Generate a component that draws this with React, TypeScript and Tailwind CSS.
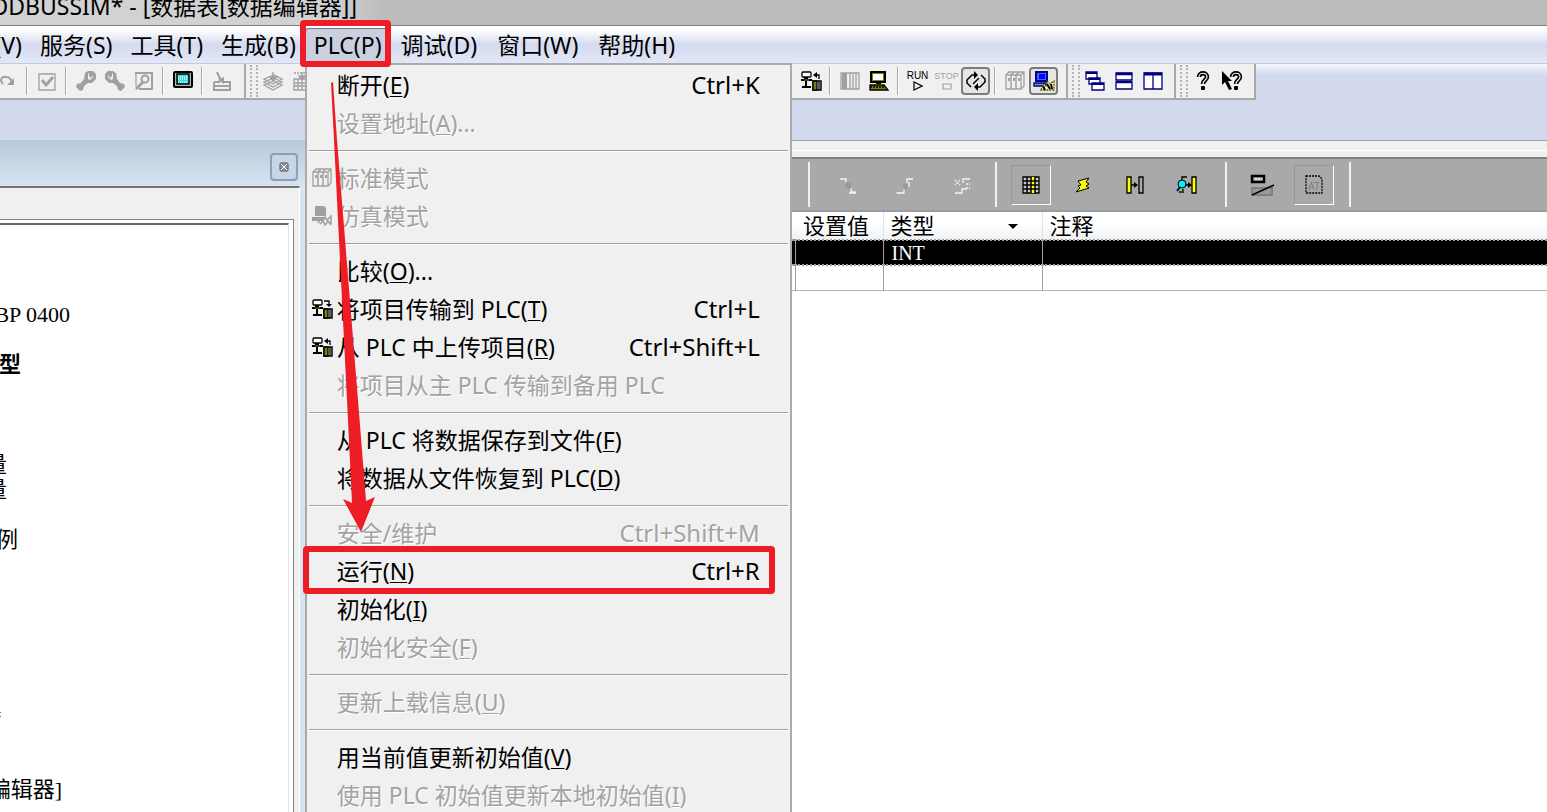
import React from "react";
import clsx from "clsx";

interface MenuEntry {
  label: string;
  hotkey?: string;
  tail?: string;
  shortcut?: string;
  disabled?: boolean;
  icon?: React.ReactNode;
  marked?: boolean;
}

interface IconProps {
  children: React.ReactNode;
}

const Icon: React.FC<IconProps> = ({ children }) => (
  <svg viewBox="0 0 20 20" className="h-5 w-5 shrink-0 overflow-visible" fill="none" stroke="#000" strokeWidth="1.3" aria-hidden="true">
    {children}
  </svg>
);

const RedoIcon = () => (
  <Icon>
    <path d="M5 13C1 9 4 5 8 6c3 0 5 2 6 5" stroke="#a0a0a0" strokeWidth="2" />
    <path d="M16 7v7H9z" fill="#a0a0a0" stroke="none" />
  </Icon>
);

const CheckIcon = () => (
  <Icon>
    <path d="M2 3h16v16H2z" stroke="#a0a0a0" />
    <path d="M5 9l4 5 7-8" stroke="#a0a0a0" strokeWidth="3" />
  </Icon>
);

const WrenchIcon: React.FC<{ flip?: boolean }> = ({ flip }) => (
  <Icon>
    <g transform={flip ? "matrix(-1 0 0 1 20 0)" : undefined} stroke="none" fill="#a0a0a0">
      <path d="M9 2l3-2h5l3 3v5l-4 4h-4l-4 3-1 4-3 1-4-4 1-3 4-1 3-4z" />
      <path d="M12 3l2-2 3 1v4l-3 3-2-1z" fill="#f0f0f0" />
      <path d="M13 1v4l2 2 2-3V1z" />
    </g>
  </Icon>
);

const FindIcon = () => (
  <Icon>
    <g stroke="#a0a0a0">
      <path d="M1 2h17v16H5" strokeWidth="2" />
      <path d="M2 2v13" />
      <circle cx="11" cy="8" r="3.5" strokeWidth="2" />
      <path d="M9 11l-7 7" strokeWidth="3" />
    </g>
  </Icon>
);

const ScreenIcon = () => (
  <Icon>
    <rect x="1" y="1" width="18" height="15" rx="1" fill="#b8b8b8" strokeWidth="2" />
    <rect x="4" y="3" width="12" height="10" fill="#40d8d8" strokeWidth="1.5" />
    <path d="M5 6h10M5 8h10M5 11h10" stroke="#c8ffff" strokeDasharray="1 1" />
  </Icon>
);

const DownloadIcon = () => (
  <Icon>
    <g stroke="#a0a0a0">
      <path d="M2 11h6M11 11h7v8H2v-8M2 15h16" strokeWidth="2" />
      <path d="M5 1l4 9" strokeWidth="2" />
      <path d="M6 9l6-3v7z" fill="#a0a0a0" stroke="none" />
    </g>
  </Icon>
);

const LayersIcon = () => (
  <Icon>
    <g stroke="#a0a0a0">
      <path d="M1 14l10-4 8 4-9 5zM1 11l10-4 8 4-9 5zM1 8l10-4 8 4-9 5z" fill="#f0f0f0" />
      <path d="M10 1v7M7 6l3 4 4-4z" fill="#a0a0a0" />
    </g>
  </Icon>
);

const GridDownIcon = () => (
  <Icon>
    <g stroke="#a0a0a0">
      <path d="M2 8h16v11H2zM2 12h16M2 15h16M6 8v11M10 8v11M14 8v11" />
      <path d="M2 2h16" strokeDasharray="2 1" />
      <path d="M10 1v5M7 5l3 4 3-4z" fill="#a0a0a0" />
    </g>
  </Icon>
);

const TransferIcon: React.FC<{ down?: boolean }> = ({ down }) => (
  <Icon>
    <rect x="1" y="1" width="9" height="5" rx="1" fill="#fff" />
    <path d="M5 6v2" strokeWidth="4" />
    <path d="M0 9h11" stroke="#000" strokeWidth="2" />
    <path d="M3 9h5" stroke="#808000" strokeWidth="1" />
    <path d="M5 10v6M1 16h9" strokeWidth="2" />
    <path d="M12 10h8v9h-8z" fill="#fff" strokeWidth="1.5" />
    <path d="M12 10h4v9h-4z" fill="#808000" />
    <path d="M18 10v9" />
    {down ? (
      <>
        <path d="M12 2h5v3" />
        <path d="M14 5h6l-3 3z" fill="#000" stroke="none" />
      </>
    ) : (
      <>
        <path d="M18 8V4h-3" />
        <path d="M12 4l4-3v6z" fill="#000" stroke="none" />
      </>
    )}
  </Icon>
);

const RackIcon = () => (
  <Icon>
    <path d="M1 2h18v16H1z" stroke="#a0a0a0" />
    <path d="M2 2h5v16H2z" fill="#a0a0a0" stroke="none" />
    <path d="M10 2v16M13 2v16M16 2v16" stroke="#a0a0a0" />
  </Icon>
);

const ComputerIcon = () => (
  <Icon>
    <rect x="2" y="1" width="14" height="10" fill="#808000" strokeWidth="2" />
    <path d="M4 3h10v6H4z" fill="#fff" stroke="none" />
    <path d="M7 12h5" strokeWidth="2" />
    <path d="M1 14h14l4 5H1z" fill="#808000" />
    <path d="M1 16h15" strokeDasharray="2 1" />
  </Icon>
);

const LoopIcon = () => (
  <Icon>
    <path d="M9 4H6L1 9v3l4 4M11 16h3l5-5V8l-4-4" strokeWidth="1.5" />
    <path d="M7 13l6-6" strokeWidth="1.5" />
    <path d="M8 0v8l4-4zM12 12v8l-4-4z" fill="#000" stroke="none" />
  </Icon>
);

const ModulesIcon = () => (
  <Icon>
    <g stroke="#a0a0a0">
      <path d="M1 4l3-3h15v14l-3 3H1zM1 4h15v14M16 4l3-3" />
      <path d="M6 4v14M11 4v14M6 4l3-3M11 4l3-3" strokeWidth="1.5" />
      <path d="M4 7v3M9 7v3M14 7v3" strokeWidth="2" />
    </g>
  </Icon>
);

const SimulatorIcon: React.FC<{ muted?: boolean }> = ({ muted }) =>
  muted ? (
    <Icon>
      <path d="M3 0h9l2 2v8H3zM0 11h12v4H0z" fill="#a0a0a0" stroke="none" />
      <path d="M6 17l3-4 2 2 2-4 2 3 4-4v8M8 18l3-3 2 4 3-4 3 4" stroke="#a0a0a0" strokeWidth="1.5" />
    </Icon>
  ) : (
    <Icon>
      <path d="M2 1h11v9H2z" fill="#4060ff" stroke="#000080" strokeWidth="2" />
      <path d="M5 3h6v5H5z" fill="#00f" stroke="none" />
      <path d="M0 12h12v3H0z" fill="#9090c0" stroke="#000080" />
      <path d="M7 19l2-6 3 2 1-5 3 3 4-3v9z" fill="#fff9b0" stroke="#555500" strokeDasharray="2 1" />
      <path d="M9 15l2 4M13 13l3 5M17 13l1 5" strokeWidth="2" />
    </Icon>
  );

const CascadeIcon = () => (
  <Icon>
    <g fill="#fff" stroke="#000080">
      <path d="M1 1h11v7H1zM4 7h11v6H4zM7 12h12v7H7z" />
      <path d="M1 2h11M4 8h11M7 13h12" strokeWidth="2" />
    </g>
  </Icon>
);

const TileRowsIcon = () => (
  <Icon>
    <path d="M2 2h16v7H2zM2 11h16v7H2z" fill="#fff" stroke="#000080" />
    <path d="M2 3h16M2 11h16" stroke="#000080" strokeWidth="2.5" />
  </Icon>
);

const TileColumnsIcon = () => (
  <Icon>
    <path d="M1 2h18v16H1zM10 2v16" fill="#fff" stroke="#000080" />
    <path d="M1 3h18" stroke="#000080" strokeWidth="3" />
  </Icon>
);

const HelpMark = () => (
  <>
    <path d="M6 6c0-5 8-5 8 0 0 3-4 3-4 7" strokeWidth="4.5" />
    <path d="M6 6c0-5 8-5 8 0 0 3-4 3-4 7" stroke="#f0f0f0" strokeWidth="1.2" />
    <rect x="8" y="15" width="4" height="4" rx="1" fill="#000" stroke="none" />
  </>
);

const HelpIcon = () => (
  <Icon>
    <HelpMark />
  </Icon>
);

const ContextHelpIcon = () => (
  <Icon>
    <path d="M0 0v14l3-3 4 8 3-1-4-8h4z" fill="#000" stroke="none" />
    <g transform="translate(4 0)">
      <HelpMark />
    </g>
  </Icon>
);

const StepIcon: React.FC<{ kind: "over" | "into" | "out" }> = ({ kind }) => (
  <Icon>
    <g stroke="#f4f4f4" strokeWidth="1.3">
      {kind === "over" && (
        <>
          <path d="M2 4h6v4M13 13v4h5M11 18h7" />
          <path d="M8 7l5 1v5l-2 2-4-4z" fill="#989898" stroke="none" />
        </>
      )}
      {kind === "into" && (
        <>
          <path d="M2 18h7v-4M12 8V4h6M2 18v-1" />
          <path d="M7 9h5l2 2-5 4-1-3z" fill="#989898" stroke="none" />
          <path d="M14 7v5" />
        </>
      )}
      {kind === "out" && (
        <>
          <path d="M3 18h7v-4h5M11 8V4h7" />
          <path d="M3 5l5 5M8 5l-5 5M14 9h4M14 13h4" strokeDasharray="2 1" />
        </>
      )}
    </g>
  </Icon>
);

const TableIcon = () => (
  <Icon>
    <path d="M2 2h16v16H2z" fill="#c8c8c8" />
    <path d="M10 2h4v16h-4z" fill="#ff0" stroke="none" />
    <path d="M2 6h16M2 10h16M2 14h16M6 2v16M10 2v16M14 2v16" strokeWidth="1.5" />
  </Icon>
);

const BoltIcon = () => (
  <Icon>
    <path d="M16 3L5 6l3 4-3 1 2 2-4 4 13-4-3-2 3-2-3-2z" fill="#ff0" strokeWidth="1" />
  </Icon>
);

const InsertIcon = () => (
  <Icon>
    <path d="M2 2h4v16H2z" fill="#ff0" />
    <path d="M14 2h4v16h-4zM6 10h6" />
    <path d="M9 7v6l4-3z" fill="#000" stroke="none" />
  </Icon>
);

const InspectIcon = () => (
  <Icon>
    <path d="M15 2h4v16h-4z" fill="#ff0" />
    <path d="M5 6V2h5M9 10h5" />
    <path d="M11 7v6l4-3z" fill="#000" stroke="none" />
    <path d="M3 12l-3 4" stroke="#000080" strokeWidth="2" />
    <circle cx="5" cy="9" r="4" fill="#00f0f0" strokeWidth="1" />
    <path d="M2 17h4v-3" stroke="#006000" strokeWidth="2" />
  </Icon>
);

const CompareIcon = () => (
  <Icon>
    <path d="M0 1h12v6H0z" fill="#aaa" strokeWidth="2.5" />
    <path d="M3 4h7" stroke="#fff" strokeDasharray="2 1" />
    <path d="M0 13h20v7H0z" fill="#999" stroke="#808080" strokeWidth="2" />
    <path d="M0 20L22 10" strokeWidth="1.5" />
  </Icon>
);

const MemoryIcon = () => (
  <Icon>
    <path d="M2 1h13l3 3v14H2z" strokeDasharray="2 1" />
    <text x="4" y="15" fontSize="10" fontFamily="Liberation Sans" fill="#808080" stroke="none">
      AT
    </text>
  </Icon>
);

const Separator = () => <div className="mx-1 h-7 w-0.5 shrink-0 border-l border-[#a8a8a8] bg-white" />;

const Grip = () => (
  <div className="ml-1 flex h-8 w-2 shrink-0 justify-between">
    <div className="border-l-2 border-dotted border-[#b4b4b4]" />
    <div className="border-l-2 border-dotted border-[#b4b4b4]" />
  </div>
);

const ToolButton: React.FC<{ title: string; pressed?: boolean; children: React.ReactNode }> = ({ title, pressed, children }) => (
  <button
    type="button"
    title={title}
    className={clsx(
      "flex h-7 w-[29px] shrink-0 flex-col items-center justify-center",
      pressed && "rounded border-2 border-[#7c7c7c] bg-[#e6e6e6]"
    )}
  >
    {children}
  </button>
);

const DarkButton: React.FC<{ title: string; pressed?: boolean; children: React.ReactNode }> = ({ title, pressed, children }) => (
  <button
    type="button"
    title={title}
    className={clsx(
      "flex h-10 w-10 shrink-0 items-center justify-center border",
      pressed ? "border-b-white border-l-[#989898] border-r-white border-t-[#989898]" : "border-transparent"
    )}
  >
    {children}
  </button>
);

const DarkSeparator = () => <div className="h-[45px] w-0.5 shrink-0 bg-[#f0f0f0]" />;

const menuGroups: MenuEntry[][] = [
  [
    { label: "断开", hotkey: "E", shortcut: "Ctrl+K" },
    { label: "设置地址", hotkey: "A", tail: "...", disabled: true },
  ],
  [
    { label: "标准模式", disabled: true, icon: <ModulesIcon /> },
    { label: "仿真模式", disabled: true, icon: <SimulatorIcon muted /> },
  ],
  [
    { label: "比较", hotkey: "O", tail: "..." },
    { label: "将项目传输到 PLC", hotkey: "T", shortcut: "Ctrl+L", icon: <TransferIcon down /> },
    { label: "从 PLC 中上传项目", hotkey: "R", shortcut: "Ctrl+Shift+L", icon: <TransferIcon /> },
    { label: "将项目从主 PLC 传输到备用 PLC", disabled: true },
  ],
  [
    { label: "从 PLC 将数据保存到文件", hotkey: "F" },
    { label: "将数据从文件恢复到 PLC", hotkey: "D" },
  ],
  [
    { label: "安全/维护", shortcut: "Ctrl+Shift+M", disabled: true },
    { label: "运行", hotkey: "N", shortcut: "Ctrl+R", marked: true },
    { label: "初始化", hotkey: "I" },
    { label: "初始化安全", hotkey: "F", disabled: true },
  ],
  [{ label: "更新上载信息", hotkey: "U", disabled: true }],
  [
    { label: "用当前值更新初始值", hotkey: "V" },
    { label: "使用 PLC 初始值更新本地初始值", hotkey: "I", disabled: true },
  ],
];

const MenuRow: React.FC<{ entry: MenuEntry }> = ({ entry }) => (
  <li className="relative">
    <button
      type="button"
      disabled={entry.disabled}
      className={clsx(
        "flex h-[38px] w-full items-center whitespace-nowrap pl-[5px] pr-[30px] text-left",
        entry.disabled && "text-[#a3a3a3] [text-shadow:1px_1px_0_#fff]"
      )}
    >
      <span className="flex w-[25px] shrink-0">{entry.icon}</span>
      <span>
        {entry.label}
        {entry.hotkey && (
          <>
            (<u className="decoration-1 underline-offset-2">{entry.hotkey}</u>)
          </>
        )}
        {entry.tail}
      </span>
      {entry.shortcut && <span className="ml-auto text-[24px]">{entry.shortcut}</span>}
    </button>
    {entry.marked && <div className="absolute -bottom-1 -left-1 -top-[6px] right-[15px] rounded-sm border-[6px] border-[#ee1c25]" />}
  </li>
);

const PlcMenu = () => (
  <div className="absolute left-0 top-full z-10 w-[487px] border-2 border-[#a9abae] bg-[#f0f0f0] pb-10 pt-px">
    {menuGroups.map((group, index) => (
      <ul key={index}>
        {index > 0 && <li role="separator" className="mx-0.5 mb-[7px] mt-2 h-0.5 border-t border-[#a0a0a0] bg-white" />}
        {group.map((entry) => (
          <MenuRow key={entry.label} entry={entry} />
        ))}
      </ul>
    ))}
  </div>
);

const MenuBar = () => (
  <nav className="flex h-[38px] shrink-0 items-center border-b border-[#c4cadb] bg-linear-to-b from-white from-10% via-[#d5dbee] via-50% to-[#e2e8f8]">
    <div className="flex w-[31px] shrink-0 justify-end overflow-hidden">
      <button type="button" className="shrink-0 px-[9px]">视图(V)</button>
    </div>
    <button type="button" className="shrink-0 px-[9px]">服务(S)</button>
    <button type="button" className="shrink-0 px-[9px]">工具(T)</button>
    <button type="button" className="shrink-0 px-[9px]">生成(B)</button>
    <div className="relative flex h-full shrink-0 items-center">
      <button type="button" className="h-[34px] rounded-t border border-b-0 border-[#6f7480] bg-[#cbd0e0] px-2">PLC(P)</button>
      <PlcMenu />
      <div className="absolute -bottom-1 -left-[5px] -top-[6px] right-0 z-20 rounded-sm border-[6px] border-[#ee1c25]" />
    </div>
    <button type="button" className="shrink-0 px-[10px]">调试(D)</button>
    <button type="button" className="shrink-0 px-[10px]">窗口(W)</button>
    <button type="button" className="shrink-0 px-[10px]">帮助(H)</button>
  </nav>
);

const barClass = "flex h-9 shrink-0 items-center border-b-2 border-r-2 border-[#a8a8a8] bg-[#f0f0f0] pr-2";

const Toolbars = () => (
  <div className="flex h-[76px] shrink-0 items-start overflow-hidden bg-linear-to-b from-[#f6f8fd] to-[#d3d9ec] to-15%">
    <div className={clsx(barClass, "w-[246px] justify-end overflow-hidden")}>
      <ToolButton title="重做"><RedoIcon /></ToolButton>
      <Separator />
      <ToolButton title="确认"><CheckIcon /></ToolButton>
      <Separator />
      <ToolButton title="分析"><WrenchIcon /></ToolButton>
      <ToolButton title="配置"><WrenchIcon flip /></ToolButton>
      <ToolButton title="查找"><FindIcon /></ToolButton>
      <Separator />
      <ToolButton title="操作屏"><ScreenIcon /></ToolButton>
      <Separator />
      <ToolButton title="下载"><DownloadIcon /></ToolButton>
    </div>
    <div className={clsx(barClass, "w-[822px]")}>
      <Grip />
      <ToolButton title="生成项目"><LayersIcon /></ToolButton>
      <ToolButton title="重新生成"><GridDownIcon /></ToolButton>
      <div className="ml-auto flex items-center">
        <ToolButton title="上传项目"><TransferIcon /></ToolButton>
        <Separator />
        <ToolButton title="机架"><RackIcon /></ToolButton>
        <ToolButton title="连接"><ComputerIcon /></ToolButton>
        <Separator />
        <ToolButton title="运行">
          <span className="font-['Liberation_Sans'] text-[10px] leading-[10px]">RUN</span>
          <svg viewBox="0 0 10 10" className="h-2.5 w-2.5" fill="none" stroke="#000" strokeWidth="1.2">
            <path d="M1 1v8l8-4z" />
          </svg>
        </ToolButton>
        <ToolButton title="停止">
          <span className="font-['Liberation_Sans'] text-[9px] leading-[10px] text-[#a0a0a0]">STOP</span>
          <svg viewBox="0 0 10 10" className="h-2.5 w-2.5" fill="none" stroke="#a0a0a0" strokeWidth="1.2">
            <path d="M1 3h8v5H1z" />
          </svg>
        </ToolButton>
        <ToolButton title="动态显示" pressed><LoopIcon /></ToolButton>
        <Separator />
        <ToolButton title="标准模式"><ModulesIcon /></ToolButton>
        <ToolButton title="仿真模式" pressed><SimulatorIcon /></ToolButton>
      </div>
    </div>
    <div className={clsx(barClass, "w-[108px]")}>
      <Grip />
      <ToolButton title="层叠"><CascadeIcon /></ToolButton>
      <ToolButton title="横向平铺"><TileRowsIcon /></ToolButton>
      <ToolButton title="纵向平铺"><TileColumnsIcon /></ToolButton>
    </div>
    <div className={clsx(barClass, "w-[80px]")}>
      <Grip />
      <ToolButton title="帮助"><HelpIcon /></ToolButton>
      <ToolButton title="这是什么？"><ContextHelpIcon /></ToolButton>
    </div>
  </div>
);

// Lines of the hardware catalogue, scrolled so that only their right ends show.
const catalogLines = [
  { text: "BMX XBP 0400", className: "w-[70px]" },
  { text: "" },
  { text: "类型", className: "w-[21px] font-bold" },
  { text: "" },
  { text: "" },
  { text: "" },
  { text: "变量", className: "w-[7px]" },
  { text: "变量", className: "w-[7px]" },
  { text: "" },
  { text: "实例", className: "w-[18px]" },
  { text: "" },
  { text: "" },
  { text: "" },
  { text: "" },
  { text: "" },
  { text: "" },
  { text: "=", className: "w-[2px] text-[#4080c0]" },
  { text: "" },
  { text: "" },
  { text: "[数据编辑器]", className: "w-[62px]" },
];

const songFont = "font-['Liberation_Serif','Noto_Sans_CJK_SC',serif]";

const ProjectPane = () => (
  <aside className="flex w-[306px] shrink-0 flex-col bg-[#d7e4f2] pr-[6px]">
    <div className="-mr-[6px] flex h-[46px] shrink-0 items-center justify-end bg-linear-to-b from-[#b9c9d9] to-[#d6e4f1] pr-2 pt-2">
      <button type="button" title="关闭" className="flex h-7 w-7 items-center justify-center rounded-sm border-2 border-[#8f9db8] bg-[#c8d5e6]">
        <svg viewBox="0 0 10 10" className="h-2.5 w-2.5" fill="none">
          <rect x="1" y="1" width="8" height="8" rx="1" stroke="#4a4a5a" />
          <path d="M2 2l6 6M8 2L2 8" stroke="#4a4a5a" strokeWidth="3" />
          <path d="M2 2l6 6M8 2L2 8" stroke="#fff" strokeWidth="1.2" />
        </svg>
      </button>
    </div>
    <div className="flex flex-1 flex-col border-r border-t-2 border-r-white border-t-[#777374] bg-[#f0f0f0] pr-[5px] pt-[31px]">
      <div className="flex flex-1 border-r border-t border-[#828790] bg-white pr-1 pt-[3px]">
        <div className={clsx("flex-1 border-r border-t-2 border-r-[#e3e3e3] border-t-[#696969] pt-[77px] text-[22px]", songFont)}>
          {catalogLines.map((line, index) => (
            <div key={index} className={clsx("flex h-[25px] items-center justify-end overflow-hidden whitespace-nowrap", line.className)}>
              {line.text}
            </div>
          ))}
        </div>
      </div>
    </div>
  </aside>
);

const DataEditor = () => (
  <main className="ml-[486px] flex min-w-0 flex-1 flex-col border-t border-[#a0a0a0] bg-white">
    <div className="h-[10px] shrink-0 border-b border-white bg-[#f0f0f0]" />
    <div className="h-[6px] shrink-0 bg-[#f0f0f0]" />
    <div className="flex h-[55px] shrink-0 items-center overflow-hidden border-b-2 border-t-2 border-b-[#9a9ca4] border-t-[#808080] bg-[#a9a9a9] pl-4">
      <DarkSeparator />
      <div className="flex gap-[17px] pl-[18px] pr-[13px]">
        <DarkButton title="步过"><StepIcon kind="over" /></DarkButton>
        <DarkButton title="步入"><StepIcon kind="into" /></DarkButton>
        <DarkButton title="步出"><StepIcon kind="out" /></DarkButton>
      </div>
      <DarkSeparator />
      <div className="flex gap-3 pl-[14px] pr-[18px]">
        <DarkButton title="表格" pressed><TableIcon /></DarkButton>
        <DarkButton title="强制"><BoltIcon /></DarkButton>
        <DarkButton title="插入"><InsertIcon /></DarkButton>
        <DarkButton title="检查"><InspectIcon /></DarkButton>
      </div>
      <DarkSeparator />
      <div className="flex gap-3 px-[15px]">
        <DarkButton title="比较"><CompareIcon /></DarkButton>
        <DarkButton title="地址" pressed><MemoryIcon /></DarkButton>
      </div>
      <DarkSeparator />
    </div>
    <table className={clsx("w-full table-fixed border-collapse text-left text-[22px] leading-6", songFont)}>
      <thead>
        <tr className="h-[27px] bg-linear-to-b from-white from-40% to-[#eef0f3]">
          <th className="w-[3px] p-0" />
          <th className="w-[88px] whitespace-nowrap border-r border-[#e2e4e8] pb-0 pl-2 pr-0 pt-[3px] font-normal">设置值</th>
          <th className="w-[159px] border-r border-[#e2e4e8] pb-0 pl-[7px] pr-0 pt-[3px] font-normal">
            <div className="flex items-center justify-between pr-6">
              类型
              <svg viewBox="0 0 10 6" className="h-1.5 w-2.5"><path d="M0 0h10L5 5z" /></svg>
            </div>
          </th>
          <th className="pb-0 pl-[7px] pr-0 pt-[3px] font-normal">注释</th>
        </tr>
      </thead>
      <tbody>
        <tr className="h-[25px] border-y-2 border-dotted border-[#a0a0a0] bg-black text-[20px] leading-5 text-white">
          <td className="border-r border-solid border-[#a0a0a0] p-0" />
          <td className="border-r border-solid border-[#a0a0a0] p-0" />
          <td className="border-r border-solid border-[#a0a0a0] py-0 pl-2 pr-0">INT</td>
          <td className="p-0" />
        </tr>
        <tr className="h-[25px] border-b border-[#b4b4b4]">
          <td className="border-r border-[#a0a0a0] p-0" />
          <td className="border-r border-[#a0a0a0] p-0" />
          <td className="border-r border-[#a0a0a0] p-0" />
          <td className="p-0" />
        </tr>
      </tbody>
    </table>
  </main>
);

export default function App() {
  return (
    <div className="relative flex h-screen flex-col overflow-hidden bg-[#d3d9ec] font-['Noto_Sans','Noto_Sans_CJK_SC',sans-serif] text-[23px] leading-7 text-black">
      <header className="flex h-[26px] shrink-0 items-end overflow-hidden border-b border-[#808080] bg-[#bcbcbc]">
        <div className="flex h-full w-[385px] justify-end overflow-hidden bg-linear-to-r from-[#d2d2d2] from-85% to-[#bcbcbc] pr-7">
          <h1 className="-mt-2 whitespace-nowrap">MODBUSSIM* - [数据表[数据编辑器]]</h1>
        </div>
      </header>
      <MenuBar />
      <Toolbars />
      <div className="flex min-h-0 flex-1">
        <ProjectPane />
        <DataEditor />
      </div>
      {/* annotation arrow from the menu title to the run command */}
      <svg viewBox="0 0 50 455" className="pointer-events-none absolute left-[328px] top-[80px] z-30 h-[455px] w-[50px]" fill="#ee1c25" aria-hidden="true">
        <path d="M3 3l2-1L9 60 30 320 38 421 47 417 33 452 15 419 24 423 19 320 6 60z" />
      </svg>
    </div>
  );
}
